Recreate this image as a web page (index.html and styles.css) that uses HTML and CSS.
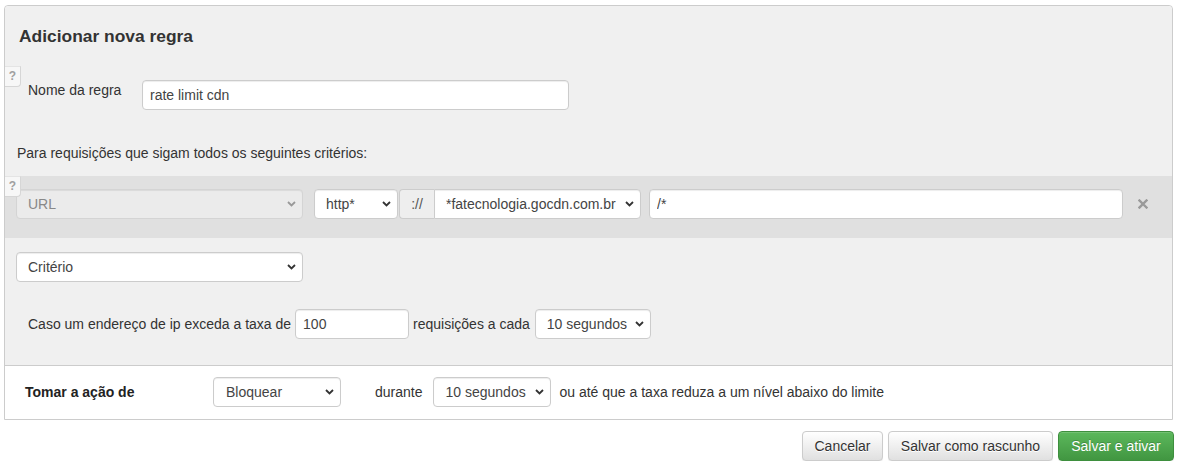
FILE: index.html
```html
<!DOCTYPE html>
<html lang="pt">
<head>
<meta charset="utf-8">
<title>Adicionar nova regra</title>
<link rel="stylesheet" href="styles.css">
</head>
<body>
<div class="page">
  <div class="panel">
    <div class="panel-body">
      <h3 class="title">Adicionar nova regra</h3>

      <div class="name-row">
        <span class="help">?</span>
        <label class="name-label">Nome da regra</label>
        <input class="field name-input" type="text" value="rate limit cdn">
      </div>

      <p class="criteria-intro">Para requisições que sigam todos os seguintes critérios:</p>

      <div class="criteria-band">
        <span class="help help-band">?</span>
        <select class="field sel sel-url" disabled><option>URL</option></select>
        <select class="field sel sel-proto"><option>http*</option></select>
        <div class="input-group">
          <span class="addon">://</span>
          <select class="field sel sel-domain"><option>*fatecnologia.gocdn.com.br</option></select>
        </div>
        <input class="field path-input" type="text" value="/*">
        <span class="remove" aria-label="remover">
          <svg width="10" height="10" viewBox="0 0 10 10"><path d="M1.5 1.5L8.5 8.5M8.5 1.5L1.5 8.5" stroke="#9a9a9a" stroke-width="2.4" stroke-linecap="square" fill="none"/></svg>
        </span>
      </div>

      <div class="criteria-add">
        <select class="field sel sel-crit"><option>Critério</option></select>
      </div>

      <div class="rate-row">
        <span>Caso um endereço de ip exceda a taxa de</span>
        <input class="field rate-input" type="text" value="100">
        <span>requisições a cada</span>
        <select class="field sel sel-period"><option>10 segundos</option></select>
      </div>
    </div>

    <div class="panel-footer">
      <span class="action-label">Tomar a ação de</span>
      <select class="field sel sel-action"><option>Bloquear</option></select>
      <span class="during">durante</span>
      <select class="field sel sel-duration"><option>10 segundos</option></select>
      <span class="until">ou até que a taxa reduza a um nível abaixo do limite</span>
    </div>
  </div>

  <div class="actions">
    <button class="btn btn-default btn-cancel" type="button">Cancelar</button>
    <button class="btn btn-default btn-draft" type="button">Salvar como rascunho</button>
    <button class="btn btn-success" type="button">Salvar e ativar</button>
  </div>
</div>
</body>
</html>
```

FILE: styles.css
```css
* { box-sizing: border-box; }

html, body {
  margin: 0;
  padding: 0;
  background: #ffffff;
}

body {
  font-family: "Liberation Sans", Arial, sans-serif;
  font-size: 14px;
  line-height: 20px;
  color: #333333;
}

.page {
  padding: 5px 8px 0 4px;
}

.panel {
  border: 1px solid #cccccc;
  border-radius: 4px 4px 0 0;
  background: #ffffff;
}

.panel-body {
  background: #f0f0f0;
  border-radius: 4px 4px 0 0;
  padding: 19px 0 26px 0;
  border-bottom: 1px solid #cccccc;
}

.title {
  margin: 0;
  padding-left: 14px;
  font-size: 17.4px;
  line-height: 22px;
  font-weight: bold;
  color: #333333;
}

.help {
  position: absolute;
  left: 0;
  width: 16px;
  height: 21px;
  background: #f7f7f7;
  border: 1px solid #d6d6d6;
  border-left: none;
  border-top-color: #e4e4e4;
  border-radius: 0 0 4px 0;
  color: #a0a0a0;
  font-size: 12px;
  font-weight: bold;
  line-height: 19px;
  text-align: center;
}

.name-row {
  position: relative;
  display: flex;
  align-items: flex-start;
  margin-top: 33px;
  padding-left: 23px;
}

.name-row .help {
  top: -14px;
}

.name-label {
  width: 114px;
  line-height: 20px;
}

.field {
  font-family: "Liberation Sans", Arial, sans-serif;
  font-size: 14px;
  color: #444444;
  height: 30px;
  border: 1px solid #cccccc;
  border-radius: 4px;
  background-color: #ffffff;
  box-shadow: inset 0 1px 1px rgba(0, 0, 0, 0.075);
  margin: 0;
  outline: none;
}

input.field {
  padding: 0 7px;
}

.name-input {
  width: 427px;
}

.sel {
  -webkit-appearance: none;
  appearance: none;
  padding: 0 22px 0 11px;
  background-image: url("data:image/svg+xml;utf8,<svg xmlns='http://www.w3.org/2000/svg' width='9' height='6' viewBox='0 0 9 6'><path d='M1 1l3.5 3.5L8 1' stroke='%23333' stroke-width='1.8' fill='none'/></svg>");
  background-repeat: no-repeat;
  background-position: right 6px center;
  background-size: 9px 6px;
}

.sel:disabled {
  background-color: #ebebeb;
  border-color: #d4d4d4;
  color: #888888;
  opacity: 1;
  background-image: url("data:image/svg+xml;utf8,<svg xmlns='http://www.w3.org/2000/svg' width='9' height='6' viewBox='0 0 9 6'><path d='M1 1l3.5 3.5L8 1' stroke='%23999' stroke-width='1.8' fill='none'/></svg>");
}

.criteria-intro {
  margin: 33px 0 0 0;
  padding-left: 12px;
  line-height: 20px;
}

.criteria-band {
  position: relative;
  display: flex;
  align-items: center;
  margin-top: 13px;
  padding: 13px 0 19px 11px;
  background: #e0e0e0;
}

.help-band {
  top: 0;
}

.sel-url { width: 287px; }

.sel-proto {
  width: 84px;
  margin-left: 11px;
}

.input-group {
  display: flex;
  margin-left: 1px;
}

.addon {
  display: flex;
  align-items: center;
  justify-content: center;
  width: 35px;
  height: 30px;
  background: #eeeeee;
  border: 1px solid #cccccc;
  border-right: none;
  border-radius: 4px 0 0 4px;
  color: #555555;
}

.sel-domain {
  width: 207px;
  border-radius: 0 4px 4px 0;
}

.path-input {
  width: 474px;
  margin-left: 8px;
}

.remove {
  display: flex;
  align-items: center;
  margin-left: 15px;
  height: 30px;
}

.criteria-add {
  margin-top: 14px;
  padding-left: 11px;
}

.sel-crit { width: 287px; }

.rate-row {
  display: flex;
  align-items: center;
  gap: 4px;
  margin-top: 27px;
  padding-left: 23px;
}

.rate-input {
  width: 114px;
}

.sel-period {
  width: 116px;
  margin-left: 1px;
}

.panel-footer {
  display: flex;
  align-items: center;
  padding: 11px 0 12px 20px;
  background: #ffffff;
}

.action-label {
  width: 188px;
  font-weight: bold;
  color: #222222;
}

.sel-action {
  width: 128px;
  padding-left: 12px;
}

.during {
  margin-left: 34px;
}

.sel-duration {
  width: 118px;
  margin-left: 11px;
}

.until {
  margin-left: 8px;
}

.actions {
  display: flex;
  justify-content: flex-end;
  gap: 5px;
  margin-top: 11px;
  margin-right: -1px;
}

.btn {
  font-family: "Liberation Sans", Arial, sans-serif;
  font-size: 14px;
  line-height: 20px;
  height: 30px;
  padding: 4px 12px;
  border-radius: 4px;
  border: 1px solid #cccccc;
  cursor: pointer;
}

.btn-cancel { width: 81px; padding: 4px 0; }
.btn-draft { width: 165px; padding: 4px 0; }

.btn-default {
  color: #333333;
  background-image: linear-gradient(to bottom, #ffffff 0%, #e0e0e0 100%);
  border-color: #cccccc;
  text-shadow: 0 1px 0 #ffffff;
  box-shadow: inset 0 1px 0 rgba(255, 255, 255, 0.15), 0 1px 1px rgba(0, 0, 0, 0.075);
}

.btn-success {
  width: 116px;
  padding: 4px 0;
  color: #ffffff;
  background-image: linear-gradient(to bottom, #5cb85c 0%, #419641 100%);
  border-color: #3e8f3e;
  text-shadow: 0 -1px 0 rgba(0, 0, 0, 0.2);
  box-shadow: inset 0 1px 0 rgba(255, 255, 255, 0.15), 0 1px 1px rgba(0, 0, 0, 0.075);
}
```
